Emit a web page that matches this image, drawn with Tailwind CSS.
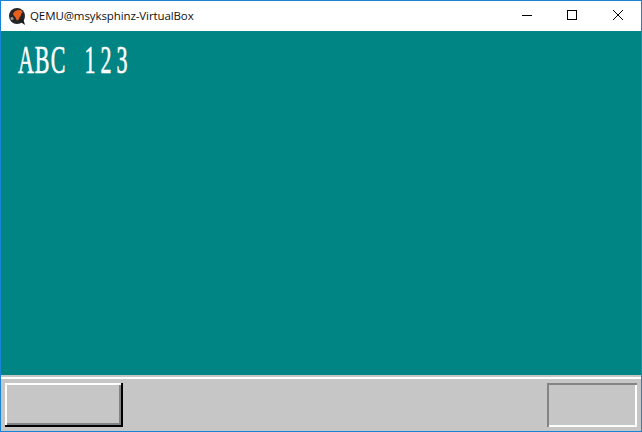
<!DOCTYPE html>
<html lang="en">

<head>
    <meta charset="UTF-8">
    <title>QEMU</title>
    <script src="https://cdn.jsdelivr.net/npm/@tailwindcss/browser@4"></script>
</head>

<body class="bg-white">
    <div class="flex flex-col w-[642px] h-[432px] border border-[#1883d7] overflow-hidden">
        <!-- title bar -->
        <div class="flex items-center h-[30px] bg-white shrink-0">
            <svg class="ml-[8px] w-[17px] h-[17px]" viewBox="0 0 17 17">
                <circle cx="8" cy="8" r="8" fill="#262626" />
                <path d="M10 13 L16 17 L14 10 Z" fill="#1c1c1c" />
                <path d="M4 6 C5 3 8 1.500 11.500 2 C14 3 14 5 12 6 C12.500 8 10.500 8.500 10 10.500 C9.500 12.500 7.500 13 7.200 11 C7 9 4.500 8 4 6 Z" fill="#e8601c" />
                <circle cx="3" cy="10.500" r="1.500" fill="#9a9a9a" />
            </svg>
            <span class="ml-[4px] text-[11.5px] leading-none text-[#101010] font-['Open_Sans',sans-serif] tracking-[-0.1px]">QEMU@msyksphinz-VirtualBox</span>
            <!-- window buttons -->
            <div class="ml-auto flex items-center h-[28px] self-start">
                <div class="flex items-center justify-center w-[46px] h-[28px] pl-[2px]">
                    <div class="w-[10px] h-px bg-black"></div>
                </div>
                <div class="flex items-center justify-center w-[46px] h-[28px]">
                    <div class="w-[10px] h-[10px] border border-black"></div>
                </div>
                <div class="flex items-center justify-center w-[46px] h-[28px]">
                    <svg class="w-[10px] h-[10px]" viewBox="0 0 10 10">
                        <path d="M0 0 L10 10 M10 0 L0 10" stroke="#000" stroke-width="1" fill="none" />
                    </svg>
                </div>
            </div>
        </div>

        <!-- desktop -->
        <div class="flex-1 bg-[#008484] pt-[10px] pl-[17px]">
            <div class="flex origin-top-left scale-y-[1.8] text-[22px] leading-[22px] text-white font-['Liberation_Serif',serif] [-webkit-text-stroke:0.35px_white]">
                <span class="w-[16px] text-center">A</span>
                <span class="w-[16px] text-center">B</span>
                <span class="w-[16px] text-center">C</span>
                <span class="w-[16px]"></span>
                <span class="w-[16px] text-center">1</span>
                <span class="w-[16px] text-center">2</span>
                <span class="w-[16px] text-center">3</span>
            </div>
        </div>

        <!-- task bar -->
        <div class="shrink-0 h-[56px] bg-[#c6c6c6]">
            <div class="mt-[2px] h-[2px] bg-white"></div>
            <div class="flex justify-between pt-[4px] pl-[4px] pr-[4px]">
                <div class="w-[118px] h-[44px] border-r-2 border-b-2 border-black">
                    <div class="w-full h-full border-t-2 border-l-2 border-white">
                        <div class="w-full h-full border-r-2 border-b-2 border-[#848484]"></div>
                    </div>
                </div>
                <div class="w-[90px] h-[44px] border-t-2 border-l-2 border-[#848484]">
                    <div class="w-full h-full border-r-2 border-b-2 border-white"></div>
                </div>
            </div>
        </div>
    </div>
</body>

</html>
